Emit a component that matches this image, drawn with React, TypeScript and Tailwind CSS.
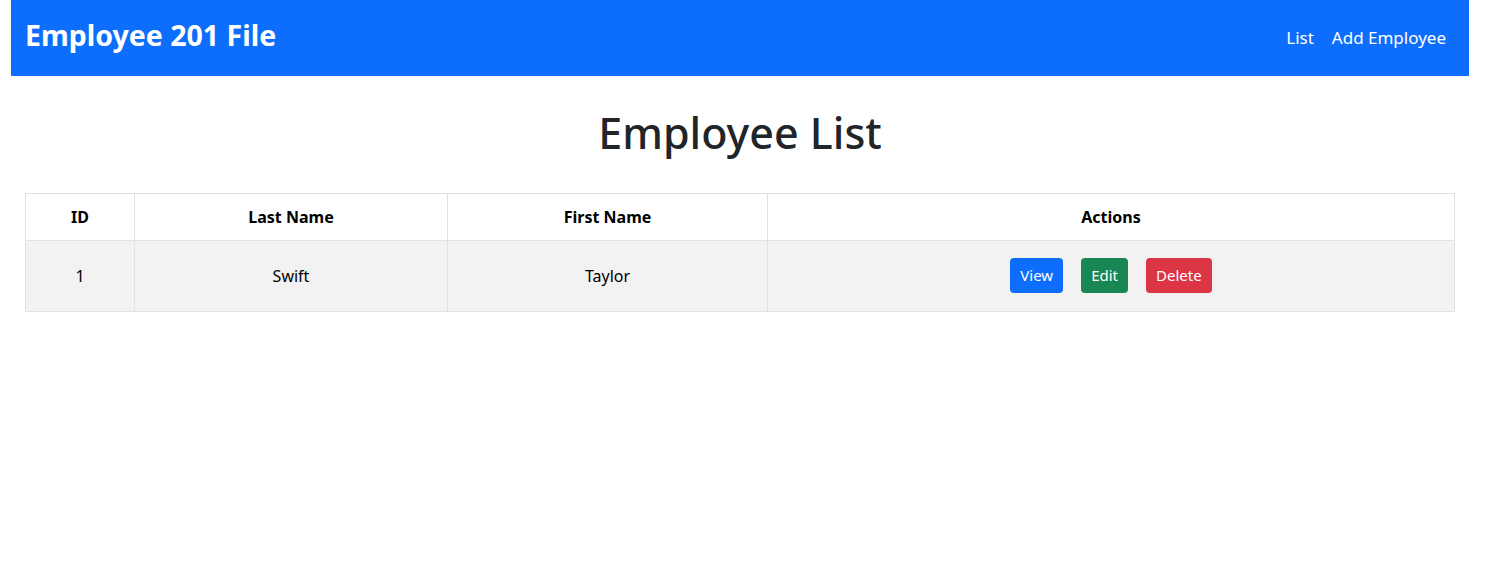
const employees = [{ id: 1, lastName: "Swift", firstName: "Taylor" }];

export default function App() {
  return (
    <div
      className="min-h-[572px] bg-white text-[#212529]"
      style={{ fontFamily: '"Noto Sans", "Open Sans", sans-serif' }}
    >
      <div className="ml-[11px] w-[1458px]">
        <nav className="flex h-[76px] items-center justify-between bg-[#0d6efd] pl-[14px] pr-[23px]">
          <span className="mb-[6px] text-[28.5px] font-bold leading-none text-white">Employee 201 File</span>
          <div className="flex items-center gap-[18px] text-[17px] text-white">
            <a>List</a>
            <a>Add Employee</a>
          </div>
        </nav>

        <h1 className="mt-[31px] text-center text-[43px] font-medium leading-[1.2]">Employee List</h1>

        <div className="mx-[14px] mt-[34px]">
          <table className="w-full border-collapse text-center text-[16px] text-black">
            <thead>
              <tr className="h-[47px]">
                <th className="w-[109px] border border-[#dee2e6] font-bold">ID</th>
                <th className="w-[313px] border border-[#dee2e6] font-bold">Last Name</th>
                <th className="w-[320px] border border-[#dee2e6] font-bold">First Name</th>
                <th className="border border-[#dee2e6] font-bold">Actions</th>
              </tr>
            </thead>
            <tbody>
              {employees.map((emp) => (
                <tr key={emp.id} className="h-[71px] bg-[#f2f2f2]">
                  <td className="border border-[#dee2e6]">{emp.id}</td>
                  <td className="border border-[#dee2e6]">{emp.lastName}</td>
                  <td className="border border-[#dee2e6]">{emp.firstName}</td>
                  <td className="border border-[#dee2e6]">
                    <div className="flex items-center justify-center gap-[18px]">
                      <button className="h-[35px] rounded-[4px] bg-[#0d6efd] px-[10px] text-[15px] text-white">
                        View
                      </button>
                      <button className="h-[35px] rounded-[4px] bg-[#198754] px-[10px] text-[15px] text-white">
                        Edit
                      </button>
                      <button className="h-[35px] rounded-[4px] bg-[#dc3545] px-[10px] text-[15px] text-white">
                        Delete
                      </button>
                    </div>
                  </td>
                </tr>
              ))}
            </tbody>
          </table>
        </div>
      </div>
    </div>
  );
}
